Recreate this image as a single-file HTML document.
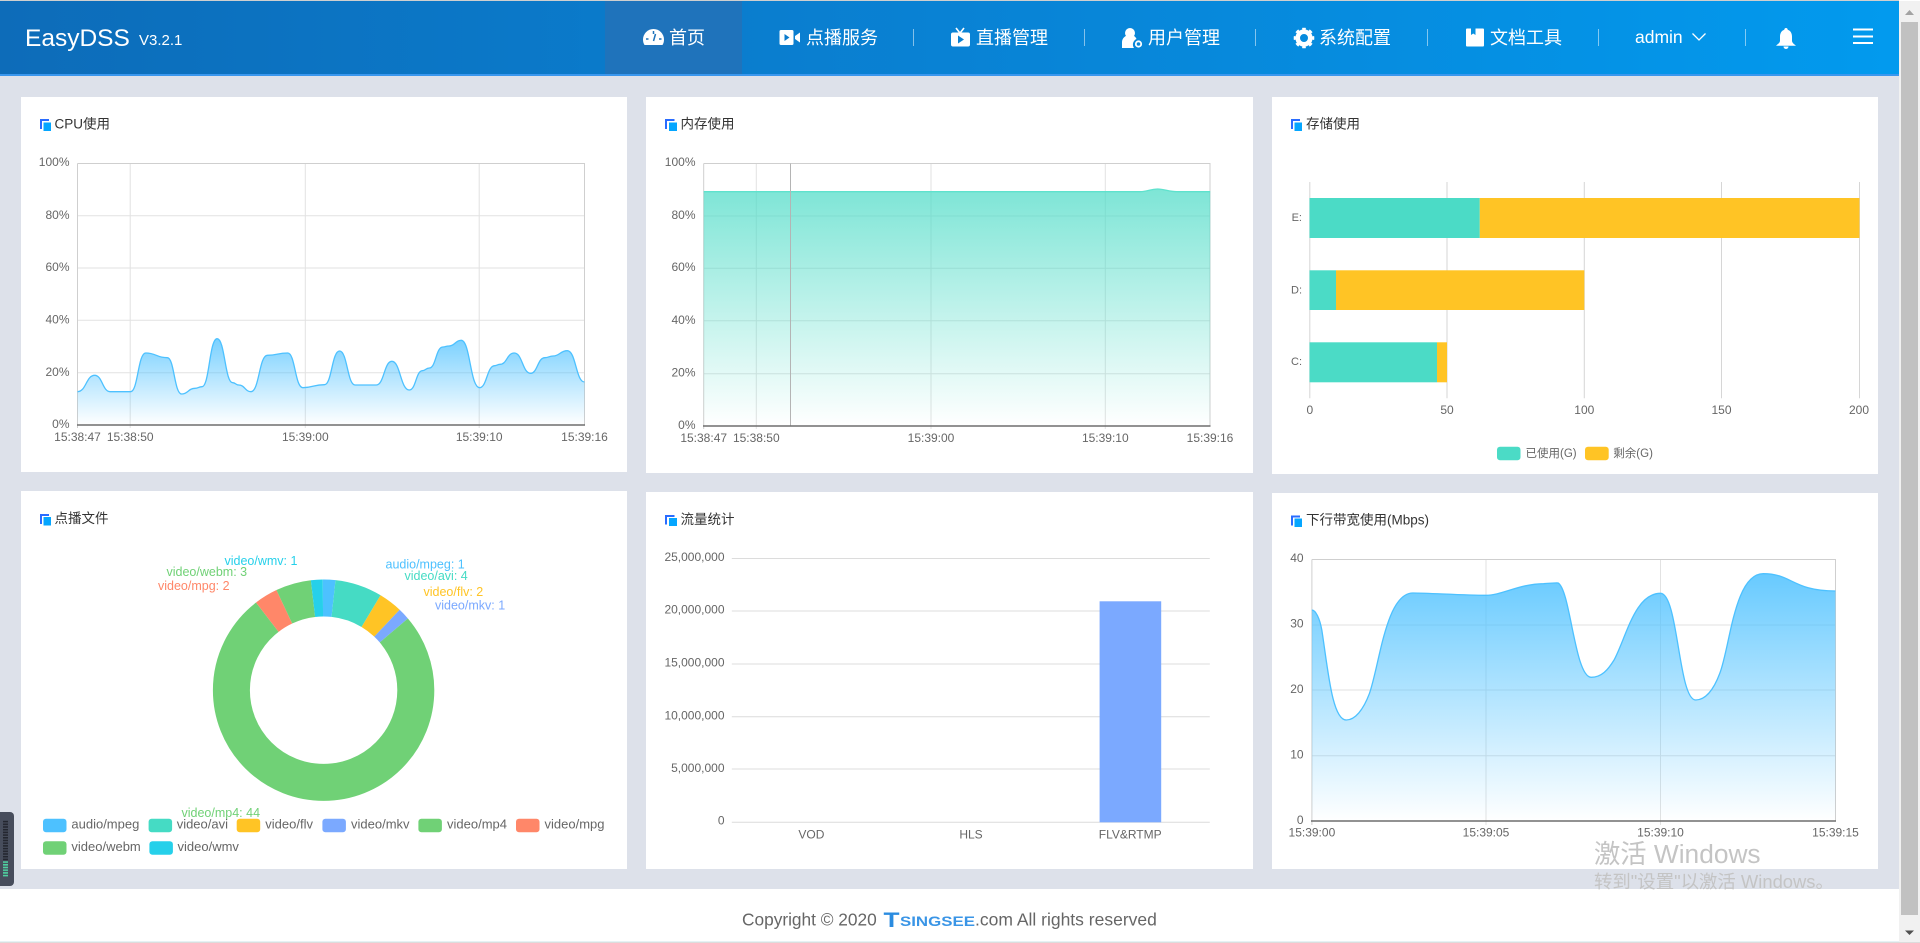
<!DOCTYPE html>
<html lang="zh-CN">
<head>
<meta charset="utf-8">
<title>EasyDSS</title>
<style>
html,body{margin:0;padding:0;width:1920px;height:943px;overflow:hidden;background:#fff}
svg{display:block;position:absolute;left:0;top:0}
text{font-family:"Liberation Sans","Noto Sans CJK SC",sans-serif}
.a{font-size:12px;fill:#666}
.k{font-size:13px;fill:#666}
.e{text-anchor:end}
.m{text-anchor:middle}
.t{font-size:13.5px;fill:#333}
.n{font-size:18px;fill:#fff}
.l{font-size:12.5px}
.g{stroke:#e2e2e2;stroke-width:1;fill:none}
.b{stroke:#cfcfcf;stroke-width:1;fill:none}
.x{stroke:#6e6e6e;stroke-width:1.5;fill:none}
.v{stroke:#fff;stroke-opacity:.5;stroke-width:1}
.s{fill:none;vector-effect:non-scaling-stroke;stroke-width:1.3}
</style>
</head>
<body>
<svg width="1920" height="943" viewBox="0 0 1920 943" xmlns="http://www.w3.org/2000/svg">
<defs>
<linearGradient id="hd" x1="0" y1="0" x2="1" y2="0"><stop offset="0" stop-color="#0d6cb9"/><stop offset=".5" stop-color="#0982d4"/><stop offset="1" stop-color="#029aee"/></linearGradient>
<linearGradient id="bl" x1="0" y1="0" x2="0" y2="1"><stop offset="0" stop-color="#4dc1ff" stop-opacity=".85"/><stop offset="1" stop-color="#4dc1ff" stop-opacity="0"/></linearGradient>
<linearGradient id="bc" x1="0" y1="0" x2="0" y2="1"><stop offset="0" stop-color="#4dc1ff" stop-opacity=".75"/><stop offset="1" stop-color="#4dc1ff" stop-opacity="0"/></linearGradient>
<linearGradient id="te" x1="0" y1="0" x2="0" y2="1"><stop offset="0" stop-color="#4bdbc6" stop-opacity=".72"/><stop offset="1" stop-color="#4bdbc6" stop-opacity="0"/></linearGradient>
<pattern id="tk" width="6" height="2.7" patternUnits="userSpaceOnUse"><rect width="6" height="1.6" fill="#23262f"/></pattern>
<pattern id="tg" width="6" height="2.7" patternUnits="userSpaceOnUse"><rect width="6" height="1.6" fill="#4fd0a0"/></pattern>
</defs>

<!-- page -->
<rect width="1899" height="943" fill="#dde1ea"/>
<rect x="0" y="889" width="1899" height="53" fill="#fff"/>
<rect x="0" y="941" width="1899" height="1" fill="#e6f2f5"/>

<!-- header -->
<rect x="0" y="1" width="1899" height="73" fill="url(#hd)"/>
<rect x="0" y="74" width="1899" height="2" fill="#3a97ee"/>
<rect x="0" y="0" width="1899" height="1" fill="#cfcfcf"/>
<rect x="605" y="1" width="137" height="73" fill="#1f73bb"/>
<text x="25" y="46" font-size="24.5" fill="#fff">EasyDSS</text>
<text x="139" y="45" font-size="15" fill="#fff">V3.2.1</text>

<!-- gauge -->
<path d="M653.500 29a10.500 10.500 0 0 0-10.500 10.500c0 2 .5 4 1.500 5.500h18c1-1.500 1.500-3.500 1.500-5.500A10.500 10.500 0 0 0 653.500 29z" fill="#fff"/>
<path d="M653.500 31v3M646 39h2.500M659 39h2.500M655.500 34l-2 7" stroke="#1f73bb" stroke-width="1.500" fill="none"/>
<text x="669" y="44" class="n">首页</text>

<!-- video -->
<rect x="779.500" y="30" width="14" height="15" rx="1.500" fill="#fff"/>
<path d="M784.500 34l5 3.500-5 3.500z" fill="#0b7bcc"/>
<path d="M795 36l5-3.500v10l-5-3.500z" fill="#fff"/>
<text x="806" y="44" class="n">点播服务</text>
<line x1="913.500" y1="29" x2="913.500" y2="46" class="v"/>

<!-- tv -->
<path d="M956 28l3.500 4.500h1l3.500-4.500" stroke="#fff" stroke-width="1.600" fill="none"/>
<rect x="951" y="32.500" width="19" height="14" rx="2" fill="#fff"/>
<path d="M958 35.500l6 4-6 4z" fill="#0b80d0"/>
<text x="976" y="44" class="n">直播管理</text>
<line x1="1084.500" y1="29" x2="1084.500" y2="46" class="v"/>

<!-- user -->
<circle cx="1130" cy="33" r="5" fill="#fff"/>
<path d="M1122 48v-6c0-3.500 3-6 5-6.500h6c1.500 .5 3 2 3.500 3.500a6 6 0 0 0-2.500 9z" fill="#fff"/>
<circle cx="1138.500" cy="44" r="2.700" fill="none" stroke="#fff" stroke-width="1.800"/>
<text x="1148" y="44" class="n">用户管理</text>
<line x1="1255.500" y1="29" x2="1255.500" y2="46" class="v"/>

<!-- gear -->
<circle cx="1304" cy="38" r="6.300" fill="none" stroke="#fff" stroke-width="4.600"/>
<circle cx="1304" cy="38" r="8.800" fill="none" stroke="#fff" stroke-width="3" pathLength="8" stroke-dasharray=".5 .5" stroke-dashoffset=".25" transform="rotate(-90 1304 38)"/>
<text x="1319" y="44" class="n">系统配置</text>
<line x1="1427.500" y1="29" x2="1427.500" y2="46" class="v"/>

<!-- doc -->
<rect x="1466" y="28.500" width="18" height="18" rx="1" fill="#fff"/>
<path d="M1471 28.500h4.500v6.500l-2.250-1.500-2.250 1.500z" fill="#0790e0"/>
<text x="1490" y="44" class="n">文档工具</text>
<line x1="1598.500" y1="29" x2="1598.500" y2="46" class="v"/>

<text x="1635" y="43" font-size="17.500" fill="#fff">admin</text>
<path d="M1692.500 33.500l6.500 6.500 6.500-6.500" fill="none" stroke="#fff" stroke-width="1.300"/>
<line x1="1745.500" y1="29" x2="1745.500" y2="46" class="v"/>

<!-- bell -->
<path d="M1786 28c1 0 1.700 .7 1.700 1.700 3 1 4.300 3.700 4.300 7v4c0 2 2 3.300 4 5h-20c2-1.700 4-3 4-5v-4c0-3.300 1.300-6 4.300-7 0-1 .7-1.700 1.700-1.700z" fill="#fff"/>
<path d="M1783.500 46.500h5a2.500 2.500 0 0 1-5 0z" fill="#fff"/>

<!-- menu -->
<rect x="1853" y="28.500" width="20" height="2" fill="#fff"/>
<rect x="1853" y="35.500" width="20" height="2" fill="#fff"/>
<rect x="1853" y="42" width="20" height="2" fill="#fff"/>

<!-- scrollbar -->
<rect x="1899" y="1" width="21" height="941" fill="#f1f1f1"/>
<rect x="1901" y="22" width="17" height="893" fill="#c1c1c1"/>
<path d="M1905 15l4.500-5 4.500 5z" fill="#a3a3a3"/>
<path d="M1905 930.500h9l-4.500 4.500z" fill="#505050"/>
<rect x="0" y="942" width="1920" height="1" fill="#dcdcdc"/>

<!-- cards -->
<rect x="21" y="97" width="606" height="375" fill="#fff"/>
<rect x="646" y="97" width="607" height="376" fill="#fff"/>
<rect x="1272" y="97" width="606" height="377" fill="#fff"/>
<rect x="21" y="491" width="606" height="378" fill="#fff"/>
<rect x="646" y="492" width="607" height="377" fill="#fff"/>
<rect x="1272" y="493" width="606" height="376" fill="#fff"/>

<!-- title icons -->
<path d="M40 119h9v2h-7v8h-2z" fill="#2a6cff"/><rect x="43.500" y="122.500" width="7.500" height="8.500" fill="#05a6ff"/>
<path d="M665 119h9.500v2h-7.500v8h-2z" fill="#2a6cff"/><rect x="669" y="122.500" width="8" height="8.500" fill="#05a6ff"/>
<path d="M1291 119h9v2h-7v8h-2z" fill="#2a6cff"/><rect x="1294.500" y="122.500" width="7.500" height="8.500" fill="#05a6ff"/>
<path d="M40 514h9v2h-7v8h-2z" fill="#2a6cff"/><rect x="43.500" y="517" width="7.500" height="8.500" fill="#05a6ff"/>
<path d="M665 515h9.500v2h-7.500v7.500h-2z" fill="#2a6cff"/><rect x="669" y="518" width="8" height="8" fill="#05a6ff"/>
<path d="M1291 515.500h9v2h-7v8h-2z" fill="#2a6cff"/><rect x="1294.500" y="518.500" width="7.500" height="8.500" fill="#05a6ff"/>

<text x="54.500" y="128.500" class="t">CPU使用</text>
<text x="680.500" y="128.500" class="t">内存使用</text>
<text x="1306" y="128.500" class="t">存储使用</text>
<text x="54.500" y="523" class="t">点播文件</text>
<text x="680.500" y="524" class="t">流量统计</text>
<text x="1306" y="524.500" class="t">下行带宽使用(Mbps)</text>

<!-- CHART 1 CPU -->
<g>
<path d="M77.500 215.700H584.500M77.500 268H584.500M77.500 320.300H584.500M77.500 372.700H584.500M130.200 163.300V428M305.300 163.300V428M479.200 163.300V428" class="g"/>
<path d="M77.500 163.500H584.500V425M77.500 163.500V428" class="b"/>
</g>
<g transform="translate(0,90) scale(.40816,.33333)">
<path fill="url(#bc)" d="M190 905C211 905 211 856 232 856C251 856 251 905 270 905L320 905C338 905 338 789 357 789C383 789 383 803 410 803C427 803 427 912 445 912C461 912 461 895 478 895C486 895 486 890 495 890C513 890 513 746 532 746C551 746 551 878 570 878C577 878 577 885 585 885C600 885 600 905 615 905C635 905 635 796 655 796C680 796 680 789 705 789C723 789 723 893 742 893C768 893 768 884 795 884C813 884 813 783 832 783C851 783 851 885 870 885L922 885C941 885 941 814 960 814C981 814 981 900 1003 900C1019 900 1019 842 1035 842C1043 842 1043 834 1052 834C1068 834 1068 771 1085 771C1092 771 1092 768 1100 768C1115 768 1115 751 1130 751C1152 751 1152 893 1175 893C1193 893 1193 827 1212 827C1218 827 1218 823 1225 823C1242 823 1242 789 1260 789C1280 789 1280 850 1300 850C1317 850 1317 803 1335 803C1345 803 1345 798 1355 798C1372 798 1372 782 1390 782C1411 782 1411 876 1432 876L1432 1005L190 1005Z"/>
<path class="s" stroke="#4dc1ff" d="M190 905C211 905 211 856 232 856C251 856 251 905 270 905L320 905C338 905 338 789 357 789C383 789 383 803 410 803C427 803 427 912 445 912C461 912 461 895 478 895C486 895 486 890 495 890C513 890 513 746 532 746C551 746 551 878 570 878C577 878 577 885 585 885C600 885 600 905 615 905C635 905 635 796 655 796C680 796 680 789 705 789C723 789 723 893 742 893C768 893 768 884 795 884C813 884 813 783 832 783C851 783 851 885 870 885L922 885C941 885 941 814 960 814C981 814 981 900 1003 900C1019 900 1019 842 1035 842C1043 842 1043 834 1052 834C1068 834 1068 771 1085 771C1092 771 1092 768 1100 768C1115 768 1115 751 1130 751C1152 751 1152 893 1175 893C1193 893 1193 827 1212 827C1218 827 1218 823 1225 823C1242 823 1242 789 1260 789C1280 789 1280 850 1300 850C1317 850 1317 803 1335 803C1345 803 1345 798 1355 798C1372 798 1372 782 1390 782C1411 782 1411 876 1432 876"/>
</g>
<line x1="77" y1="425" x2="585" y2="425" class="x"/>
<text class="a e" x="69.500" y="166">100%</text>
<text class="a e" x="69.500" y="219">80%</text>
<text class="a e" x="69.500" y="271">60%</text>
<text class="a e" x="69.500" y="323.300">40%</text>
<text class="a e" x="69.500" y="376">20%</text>
<text class="a e" x="69.500" y="428">0%</text>
<text class="a m" x="77.500" y="441">15:38:47</text>
<text class="a m" x="130.200" y="441">15:38:50</text>
<text class="a m" x="305.300" y="441">15:39:00</text>
<text class="a m" x="479.200" y="441">15:39:10</text>
<text class="a m" x="584.500" y="441">15:39:16</text>

<!-- CHART 2 MEM -->
<path d="M703.700 216H1210M703.700 268.300H1210M703.700 320.700H1210M703.700 373.700H1210M756.300 163.300V429M931 163.300V429M1105.300 163.300V429" class="g"/>
<path d="M703.700 163.500H1210V426M703.700 163.500V429" class="b"/>
<g transform="translate(640,90) scale(.40816,.33333)">
<path fill="url(#te)" d="M156 305L1225 305C1245 305 1250 297 1268 297C1285 297 1295 305 1315 305L1397 305L1397 1008L156 1008Z"/>
<path class="s" stroke="#5fe2cd" d="M156 305L1225 305C1245 305 1250 297 1268 297C1285 297 1295 305 1315 305L1397 305"/>
</g>
<line x1="790.500" y1="163.500" x2="790.500" y2="426" stroke="#b4b4b4" stroke-width="1"/>
<line x1="703" y1="426" x2="1210.500" y2="426" class="x"/>
<text class="a e" x="695.500" y="166">100%</text>
<text class="a e" x="695.500" y="219">80%</text>
<text class="a e" x="695.500" y="271">60%</text>
<text class="a e" x="695.500" y="324">40%</text>
<text class="a e" x="695.500" y="376.700">20%</text>
<text class="a e" x="695.500" y="429">0%</text>
<text class="a m" x="703.700" y="442">15:38:47</text>
<text class="a m" x="756.300" y="442">15:38:50</text>
<text class="a m" x="931" y="442">15:39:00</text>
<text class="a m" x="1105.300" y="442">15:39:10</text>
<text class="a m" x="1210" y="442">15:39:16</text>

<!-- CHART 3 STORAGE -->
<path d="M1309.800 182V398.300M1447 182V398.300M1584.300 182V398.300M1721.500 182V398.300M1859.500 182V398.300" stroke="#d6d6d6" stroke-width="1" fill="none"/>
<rect x="1309.500" y="198" width="170.300" height="40" fill="#4bdbc6"/>
<rect x="1479.800" y="198" width="379.700" height="40" fill="#ffc425"/>
<rect x="1309.500" y="270.300" width="26.500" height="39.700" fill="#4bdbc6"/>
<rect x="1336" y="270.300" width="248.300" height="39.700" fill="#ffc425"/>
<rect x="1309.500" y="342.300" width="127.500" height="40" fill="#4bdbc6"/>
<rect x="1437" y="342.300" width="10" height="40" fill="#ffc425"/>
<text x="1302" y="221" font-size="11" fill="#666" text-anchor="end">E:</text>
<text x="1302" y="293.500" font-size="11" fill="#666" text-anchor="end">D:</text>
<text x="1302" y="365" font-size="11" fill="#666" text-anchor="end">C:</text>
<text class="a m" x="1309.800" y="414">0</text>
<text class="a m" x="1447" y="414">50</text>
<text class="a m" x="1584.300" y="414">100</text>
<text class="a m" x="1721.500" y="414">150</text>
<text class="a m" x="1859" y="414">200</text>
<rect x="1497" y="446.700" width="23.500" height="13.500" rx="3" fill="#4bdbc6"/>
<rect x="1585" y="446.700" width="23.700" height="13.500" rx="3" fill="#ffc425"/>
<text x="1525.500" y="457" font-size="11.500" fill="#666">已使用(G)</text>
<text x="1613.300" y="457" font-size="11.500" fill="#666">剩余(G)</text>

<!-- CHART 4 DONUT -->
<g fill="none" stroke-width="37" transform="rotate(-90 323.600 690.200)">
<circle cx="323.600" cy="690.200" r="92.200" pathLength="58" stroke="#4dc1ff" stroke-dasharray="1 57"/>
<circle cx="323.600" cy="690.200" r="92.200" pathLength="58" stroke="#45dbc4" stroke-dasharray="4 54" stroke-dashoffset="-1"/>
<circle cx="323.600" cy="690.200" r="92.200" pathLength="58" stroke="#ffc425" stroke-dasharray="2 56" stroke-dashoffset="-5"/>
<circle cx="323.600" cy="690.200" r="92.200" pathLength="58" stroke="#7ba9ff" stroke-dasharray="1 57" stroke-dashoffset="-7"/>
<circle cx="323.600" cy="690.200" r="92.200" pathLength="58" stroke="#70d176" stroke-dasharray="44 14" stroke-dashoffset="-8"/>
<circle cx="323.600" cy="690.200" r="92.200" pathLength="58" stroke="#ff8769" stroke-dasharray="2 56" stroke-dashoffset="-52"/>
<circle cx="323.600" cy="690.200" r="92.200" pathLength="58" stroke="#70d176" stroke-dasharray="3 55" stroke-dashoffset="-54"/>
<circle cx="323.600" cy="690.200" r="92.200" pathLength="58" stroke="#26d0ea" stroke-dasharray="1 57" stroke-dashoffset="-57"/>
</g>
<text class="l" fill="#26d0ea" x="224.500" y="565">video/wmv: 1</text>
<text class="l" fill="#70d176" x="166.500" y="576">video/webm: 3</text>
<text class="l" fill="#ff8769" x="158" y="590">video/mpg: 2</text>
<text class="l" fill="#4dc1ff" x="385.500" y="568.700">audio/mpeg: 1</text>
<text class="l" fill="#45dbc4" x="404.500" y="580">video/avi: 4</text>
<text class="l" fill="#ffc425" x="423.500" y="596">video/flv: 2</text>
<text class="l" fill="#7ba9ff" x="435" y="609.700">video/mkv: 1</text>
<text class="l" fill="#70d176" x="181.500" y="817">video/mp4: 44</text>
<rect x="43" y="818.700" width="23.500" height="13.500" rx="3" fill="#4dc1ff"/>
<rect x="148.600" y="818.700" width="23.500" height="13.500" rx="3" fill="#45dbc4"/>
<rect x="236.700" y="818.700" width="23.500" height="13.500" rx="3" fill="#ffc425"/>
<rect x="322.400" y="818.700" width="23.500" height="13.500" rx="3" fill="#7ba9ff"/>
<rect x="418.400" y="818.700" width="23.500" height="13.500" rx="3" fill="#70d176"/>
<rect x="516" y="818.700" width="23.500" height="13.500" rx="3" fill="#ff8769"/>
<rect x="43" y="841.300" width="23.500" height="13.500" rx="3" fill="#70d176"/>
<rect x="149.400" y="841.300" width="23.500" height="13.500" rx="3" fill="#26d0ea"/>
<text class="k" x="71.400" y="828.500">audio/mpeg</text>
<text class="k" x="176.700" y="828.500">video/avi</text>
<text class="k" x="265.300" y="828.500">video/flv</text>
<text class="k" x="351" y="828.500">video/mkv</text>
<text class="k" x="447" y="828.500">video/mp4</text>
<text class="k" x="544.500" y="828.500">video/mpg</text>
<text class="k" x="71.400" y="851">video/webm</text>
<text class="k" x="177.500" y="851">video/wmv</text>

<!-- CHART 5 TRAFFIC -->
<path d="M731.800 558.500H1209.800M731.800 611H1209.800M731.800 664H1209.800M731.800 716.700H1209.800M731.800 769H1209.800M731.800 822.300H1209.800" stroke="#dcdcdc" stroke-width="1" fill="none"/>
<rect x="1099.600" y="601.300" width="61.600" height="221" fill="#7ba9ff"/>
<text class="a e" x="724.500" y="561">25,000,000</text>
<text class="a e" x="724.500" y="613.700">20,000,000</text>
<text class="a e" x="724.500" y="666.300">15,000,000</text>
<text class="a e" x="724.500" y="719.700">10,000,000</text>
<text class="a e" x="724.500" y="772">5,000,000</text>
<text class="a e" x="724.500" y="824.700">0</text>
<text class="a m" x="811.400" y="838.300">VOD</text>
<text class="a m" x="971" y="838.300">HLS</text>
<text class="a m" x="1130.200" y="838.300">FLV&amp;RTMP</text>

<!-- CHART 6 BANDWIDTH -->
<path d="M1311.900 625H1835.500M1311.900 690H1835.500M1311.900 755.700H1835.500M1486 559.300V825M1660.500 559.300V825" class="g"/>
<path d="M1311.900 559.500H1835.500V821M1311.900 559.500V825" class="b"/>
<g transform="translate(1270,490) scale(.41454,.33333)">
<path fill="url(#bl)" d="M101 360C110 360 120 385 125 420C140 540 150 690 184 690C205 690 225 660 240 610C265 520 280 309 345 309C380 309 470 316 520 316C560 316 600 282 660 281C680 280 690 278 695 279C725 300 735 562 775 562C800 562 815 540 830 510C860 440 880 310 942 310C985 310 985 630 1027 630C1050 630 1070 600 1085 550C1110 470 1120 251 1190 251C1260 251 1260 303 1364 303L1364 993L101 993Z"/>
<path class="s" stroke="#4dc1ff" d="M101 360C110 360 120 385 125 420C140 540 150 690 184 690C205 690 225 660 240 610C265 520 280 309 345 309C380 309 470 316 520 316C560 316 600 282 660 281C680 280 690 278 695 279C725 300 735 562 775 562C800 562 815 540 830 510C860 440 880 310 942 310C985 310 985 630 1027 630C1050 630 1070 600 1085 550C1110 470 1120 251 1190 251C1260 251 1260 303 1364 303"/>
</g>
<line x1="1311" y1="821" x2="1836" y2="821" class="x"/>
<text class="a e" x="1303.600" y="562">40</text>
<text class="a e" x="1303.600" y="627.300">30</text>
<text class="a e" x="1303.600" y="693">20</text>
<text class="a e" x="1303.600" y="758.700">10</text>
<text class="a e" x="1303.600" y="824">0</text>
<text class="a m" x="1311.900" y="836.300">15:39:00</text>
<text class="a m" x="1486" y="836.300">15:39:05</text>
<text class="a m" x="1660.500" y="836.300">15:39:10</text>
<text class="a m" x="1835.500" y="836.300">15:39:15</text>

<!-- watermark -->
<text x="1594" y="863" font-size="26.300" fill="#c4c4c4">激活 Windows</text>
<text x="1594" y="888" font-size="18.400" fill="#c4c4c4">转到"设置"以激活 Windows。</text>

<!-- footer -->
<text x="742" y="925.500" font-size="17.300" fill="#666">Copyright © 2020</text>
<text x="883.500" y="927" font-size="21" font-weight="bold" fill="#2b8ce0" textLength="16" lengthAdjust="spacingAndGlyphs">T</text>
<text x="900" y="926" font-size="14" font-weight="bold" fill="#3a95e6" textLength="75" lengthAdjust="spacingAndGlyphs">SINGSEE</text>
<text x="975" y="925.500" font-size="17.500" fill="#666">.com All rights reserved</text>

<!-- left widget -->
<path d="M0 812h10a4 4 0 0 1 4 4v66a4 4 0 0 1-4 4H0z" fill="#474d5c"/>
<rect x="3" y="820.500" width="5" height="40" fill="url(#tk)"/>
<rect x="3" y="861" width="5" height="16.500" fill="url(#tg)"/>
</svg>
</body>
</html>
